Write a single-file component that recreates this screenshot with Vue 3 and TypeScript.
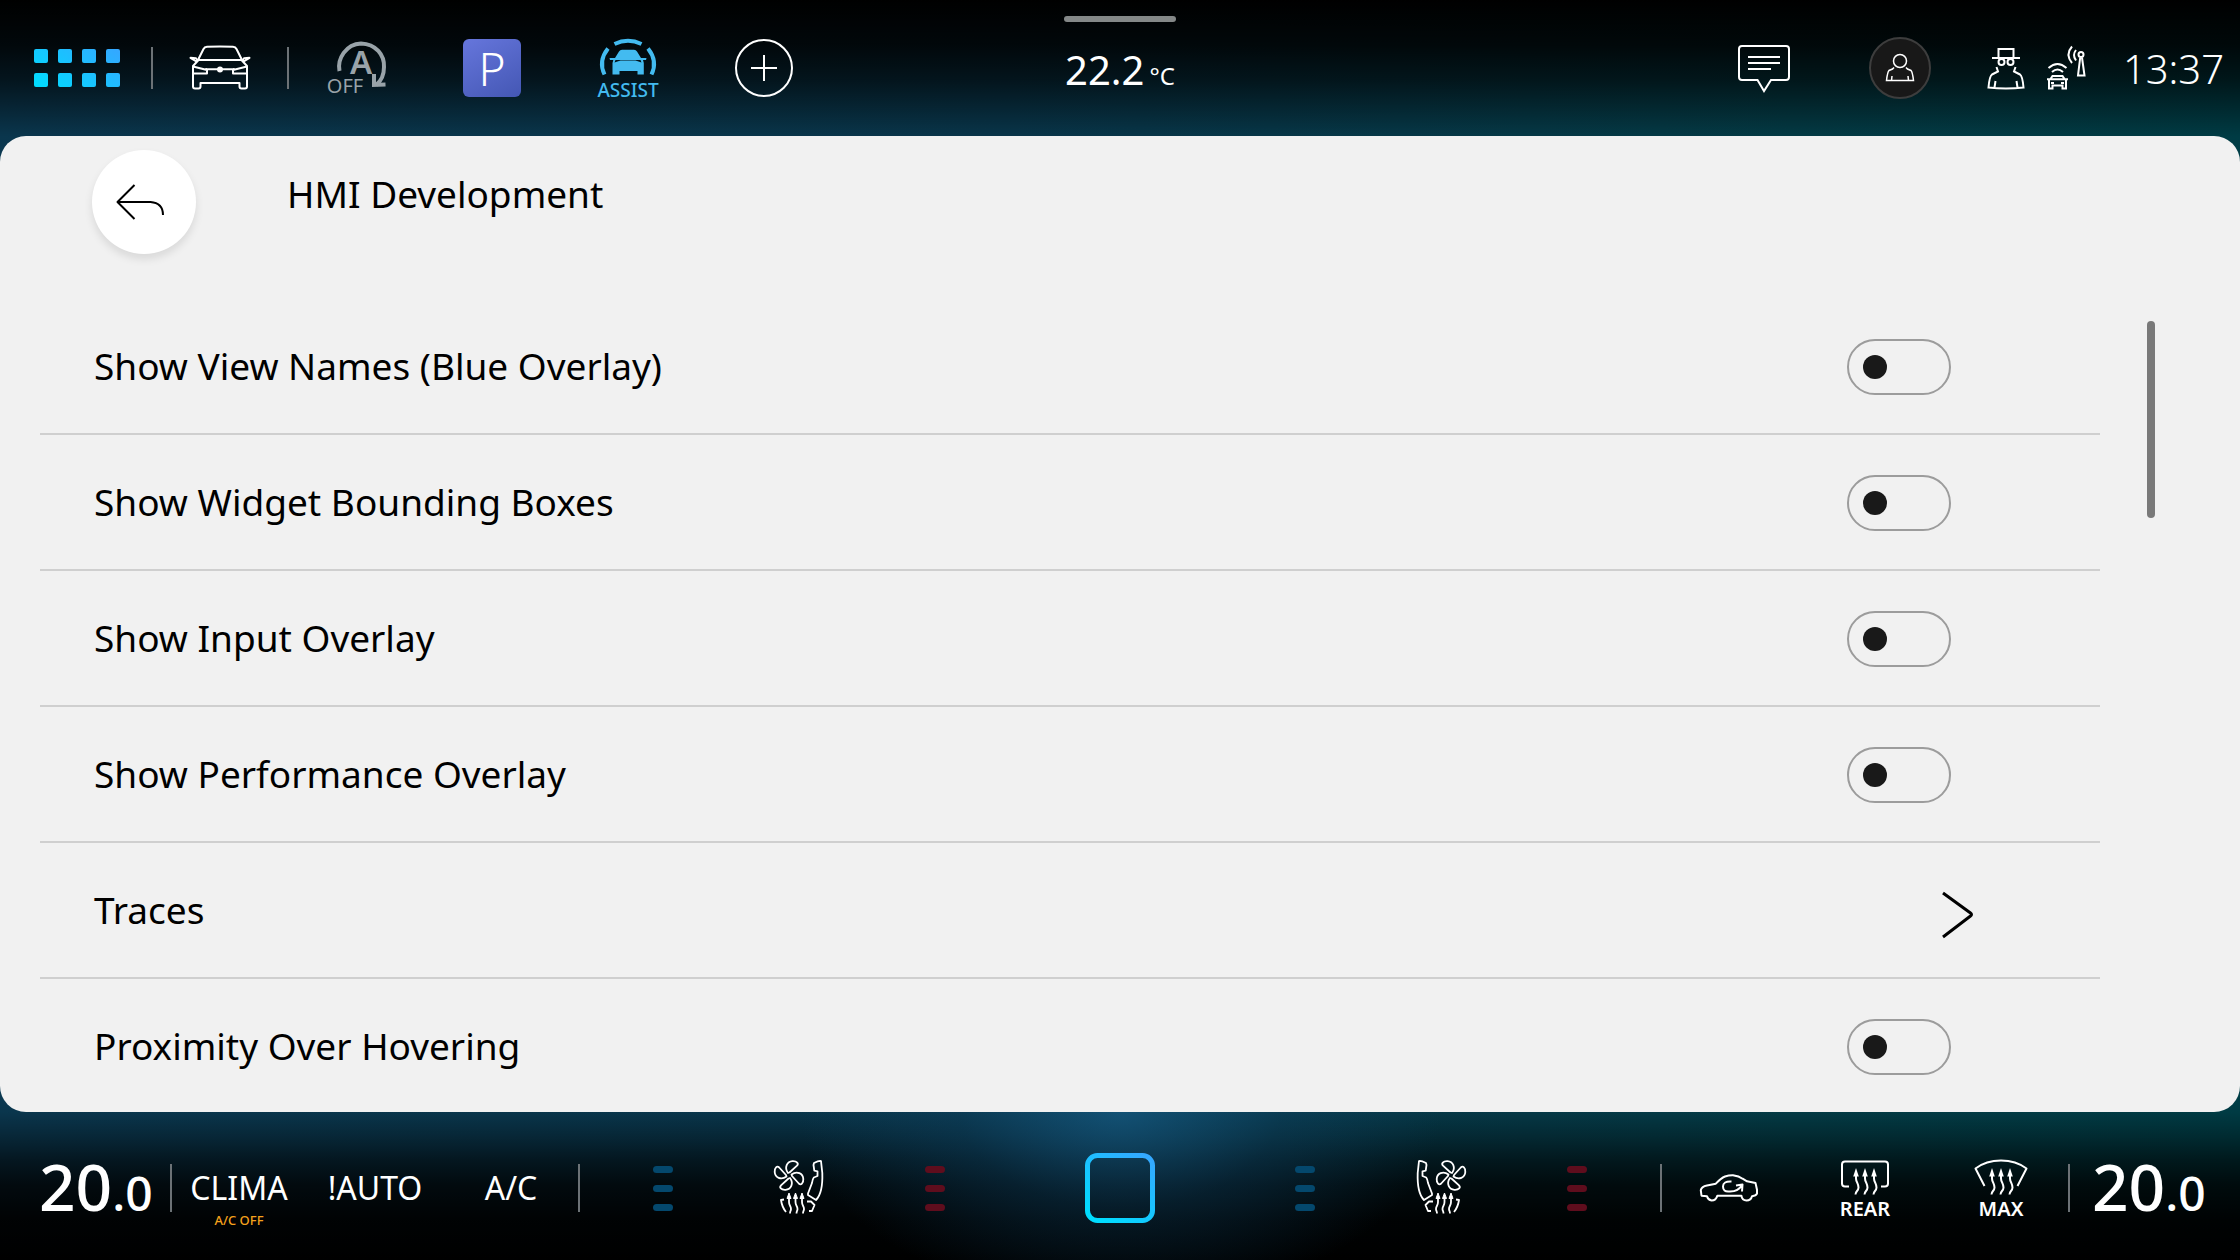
<script setup lang="ts">
import { ref } from 'vue'

interface Setting {
  id: string
  label: string
  kind: 'toggle' | 'link'
  on?: boolean
}

const settings = ref<Setting[]>([
  { id: 'view-names', label: 'Show View Names (Blue Overlay)', kind: 'toggle', on: false },
  { id: 'bounding-boxes', label: 'Show Widget Bounding Boxes', kind: 'toggle', on: false },
  { id: 'input-overlay', label: 'Show Input Overlay', kind: 'toggle', on: false },
  { id: 'performance', label: 'Show Performance Overlay', kind: 'toggle', on: false },
  { id: 'traces', label: 'Traces', kind: 'link' },
  { id: 'proximity', label: 'Proximity Over Hovering', kind: 'toggle', on: false },
])
</script>

<template>
  <div class="screen">
    <header class="topbar">
      <nav class="top-left">
        <button class="apps" aria-label="All apps">
          <svg width="86" height="38" viewBox="0 0 86 38">
            <defs>
              <linearGradient id="apps-fill" gradientUnits="userSpaceOnUse" x1="20" y1="50" x2="66" y2="-12">
                <stop offset="0" stop-color="#00dcff" />
                <stop offset="1" stop-color="#34a8ff" />
              </linearGradient>
            </defs>
            <g fill="url(#apps-fill)">
              <template v-for="row in 2" :key="row">
                <rect v-for="col in 4" :key="col" :x="(col - 1) * 24" :y="(row - 1) * 24" width="14" height="14" rx="2" />
              </template>
            </g>
          </svg>
        </button>
        <span class="rule rule-top"></span>
        <button class="slot" aria-label="Vehicle">
          <svg width="64" height="48" viewBox="0 0 64 48" fill="none" stroke="#fff" stroke-width="2" stroke-linejoin="round">
            <path d="M10 16 15.500 5q1-2 3.500-2.200Q32 2 45 2.800q2.500.2 3.500 2.200L54 16" />
            <path d="M9 16H55M10.500 16 5 22V42.500q0 2 2 2h3.500q2 0 2-2V39H51.500v3.500q0 2 2 2H57q2 0 2-2V22l-5.500-6" />
            <path d="M2.500 13.800 8 14.200l1.200 1.800-1.700 1zM61.500 13.800 56 14.200l-1.200 1.800 1.700 1z" />
            <path d="M5 22.500 19 26v3.500H5M59 22.500 45 26v3.500H59M17.500 25.300H46.500" />
            <circle cx="32" cy="25.500" r="2" fill="#fff" />
          </svg>
        </button>
        <span class="rule rule-top"></span>
        <button class="slot" aria-label="Start-stop off">
          <svg width="64" height="56" viewBox="0 0 64 56">
            <g fill="none" stroke="#99a3a9" stroke-width="4">
              <path d="M15.500 31C13 19 22 4 37 3.500 52 4 60.500 15 60 27c0 9-4 15-8 18" />
              <path d="M50 34V45L61.500 44.500" />
            </g>
            <g fill="#99a3a9">
              <text x="37" y="34" font-size="33" font-weight="600" text-anchor="middle">A</text>
              <text x="21" y="53" font-size="20" text-anchor="middle">OFF</text>
            </g>
          </svg>
        </button>
        <button class="slot" aria-label="Parking">
          <span class="park">P</span>
        </button>
        <button class="slot" aria-label="Assist">
          <svg width="72" height="64" viewBox="0 0 72 64" fill="#43bbf0">
            <g fill="none" stroke="#43bbf0" stroke-width="4">
              <path d="M22.500 8Q36 1.500 49.500 8M16 12.500Q6 25 12.500 38.500M56 12.500Q66 25 59.500 38.500" />
            </g>
            <path d="M23 22 27 15.500q1-1.700 3-1.700H42q2 0 3 1.700L49 22h5.500l-.5 2h-3l.8 3V38.500H45.500V35H27.500v3.500H20.500V27l.8-3H18l-.5-2z" />
            <path d="M22.500 26.500l1-2.500H48.500l1 2.500-6-2H28.500z" fill="#02151c" />
            <text x="36" y="61" font-size="19" font-weight="500" text-anchor="middle">ASSIST</text>
          </svg>
        </button>
        <button class="slot" aria-label="Add shortcut">
          <svg width="58" height="58" viewBox="0 0 58 58" fill="none" stroke="#fff" stroke-width="2">
            <circle cx="29" cy="29" r="28" />
            <path d="M29 16V42M16 29H42" />
          </svg>
        </button>
      </nav>

      <div class="outside">
        <span class="handle"></span>
        <p class="outside-temp">22.2<small>°C</small></p>
      </div>

      <div class="top-right">
        <button class="slot" aria-label="Messages">
          <svg width="54" height="50" viewBox="0 0 54 50" fill="none" stroke="#fff" stroke-width="2">
            <path d="M20.500 37H5q-3 0-3-3V6q0-3 3-3H49q3 0 3 3V34q0 3-3 3H34L27 48z" />
            <path d="M11 14H43M11 20H43M11 26H34" />
          </svg>
        </button>
        <button class="slot" aria-label="Profile">
          <span class="avatar">
            <svg width="30" height="30" viewBox="0 0 30 30" fill="none" stroke="#fff" stroke-width="1.500">
              <circle cx="15" cy="8" r="6.500" />
              <path d="M9 14.500 7.500 16 4 17.500Q2.500 19 1.500 27.500H28.500Q27.500 19 26 17.500L22.500 16 21 14.500M7 23l-.5 4.500M23 23l.5 4.500" />
            </svg>
          </span>
        </button>
        <span class="status">
          <svg width="40" height="44" viewBox="0 0 40 44" fill="none" stroke="#fff" stroke-width="2">
            <path d="M12.500 12V3h15v9M6 12H34" />
            <circle cx="15.500" cy="16" r="3" />
            <circle cx="24.500" cy="16" r="3" />
            <path d="M10.500 21 12 25.500 6 28.500Q3.500 30 2.500 41.500q8.500 1 17.500 1t17.500-1Q36.500 30 34 28.500l-6-3 1.500-4.500M9.500 35 8.500 41.500M30.500 35l1 6.500" />
          </svg>
          <svg width="40" height="46" viewBox="0 0 40 46" fill="none" stroke="#fff" stroke-width="2">
            <path d="M4.500 34 6.500 31H16.500l2 3M1 34.200H22M3 35V43.500H6.500V40.500H16.500v3H20V35M5 38H8M15 38h3" />
            <path d="M2.500 23q9-8 18 0M6 27q5.500-5 11 0" />
            <circle cx="35" cy="9.500" r="2.500" />
            <path d="M34.200 12.500 32 30.500h6.500L36 12.500M26 1.500q-7 8 0 16.500M30 5q-4 5 0 10.500" />
          </svg>
        </span>
        <time class="clock">13:37</time>
      </div>
    </header>

    <main class="panel">
      <div class="panel-head">
        <button class="back" aria-label="Back">
          <svg width="50" height="38" viewBox="0 0 50 38" fill="none" stroke="#000" stroke-width="2" stroke-linejoin="round">
            <path d="M18.500 2 1.500 19 18.500 36M2 19H34.500Q47 20 47 32" />
          </svg>
        </button>
        <h1>HMI Development</h1>
      </div>
      <div class="panel-body">
        <ul class="settings">
          <li v-for="item in settings" :key="item.id">
            <label v-if="item.kind === 'toggle'" class="row">
              <span class="name">{{ item.label }}</span>
              <input v-model="item.on" class="toggle" type="checkbox" role="switch" />
            </label>
            <a v-else class="row row-link" href="#traces">
              <span class="name">{{ item.label }}</span>
              <svg width="32" height="56" viewBox="0 0 32 56" fill="none" stroke="#000" stroke-width="3" stroke-linejoin="round">
                <path d="M2 10 29.500 30Q31.500 31.500 29.500 33L2 54" />
              </svg>
            </a>
          </li>
        </ul>
        <div class="track"><span class="thumb"></span></div>
      </div>
    </main>

    <footer class="climate">
      <p class="temp">20<small>.0</small></p>
      <span class="rule rule-bottom"></span>
      <div class="group">
        <button class="slot word">CLIMA<small>A/C OFF</small></button>
        <button class="slot word">!AUTO</button>
        <button class="slot word">A/C</button>
      </div>
      <span class="rule rule-bottom"></span>
      <div class="group zone">
        <button class="slot level cold" aria-label="Driver seat cooling"><i></i><i></i><i></i></button>
        <button class="slot" aria-label="Driver seat climate">
          <svg class="seat" width="52" height="58" viewBox="0 0 52 58"><use href="#seat-climate" /></svg>
        </button>
        <button class="slot level hot" aria-label="Driver seat heating"><i></i><i></i><i></i></button>
      </div>
      <button class="home" aria-label="Home">
        <svg width="70" height="70" viewBox="0 0 70 70">
          <defs>
            <linearGradient id="home-stroke" x1="0.2" y1="1" x2="0.9" y2="0">
              <stop offset="0" stop-color="#00dcff" />
              <stop offset="1" stop-color="#34a8ff" />
            </linearGradient>
          </defs>
          <rect x="2.500" y="2.500" width="65" height="65" rx="10" fill="none" stroke="url(#home-stroke)" stroke-width="5" />
        </svg>
      </button>
      <div class="group zone">
        <button class="slot level cold" aria-label="Passenger seat cooling"><i></i><i></i><i></i></button>
        <button class="slot" aria-label="Passenger seat climate">
          <svg class="seat mirrored" width="52" height="58" viewBox="0 0 52 58"><use href="#seat-climate" /></svg>
        </button>
        <button class="slot level hot" aria-label="Passenger seat heating"><i></i><i></i><i></i></button>
      </div>
      <span class="rule rule-bottom"></span>
      <div class="group">
        <button class="slot" aria-label="Air recirculation">
          <svg width="60" height="30" viewBox="0 0 60 30" fill="none" stroke="#fff" stroke-width="2" stroke-linejoin="round">
            <path d="M8 23.300 2.500 22.700 1.800 17.300Q2.500 13.500 8 12.500L16.800 10.700Q22 5 26 3.500 30 2.200 34 2.300 40 3 43.600 5.700L48 8.300 56.500 10 58 16.700V20.700Q57 23 53 23.300 52 27.500 47.500 27.500 43 27.500 42.400 22.700H18.300Q17 27.500 12.600 27.500 9 27 8 23.300z" />
            <path d="M32.500 8.500Q24 8 24 13.500T30 18.500Q39 19 43 12M37 12.500 43.500 11.500 43 18.500" />
          </svg>
        </button>
        <button class="slot stack">
          <svg width="50" height="38" viewBox="0 0 50 38" fill="none" stroke="#fff" stroke-width="2">
            <path d="M9 27.500H5q-3 0-3-3V5.500q0-3 3-3H45q3 0 3 3v19q0 3-3 3H41" />
            <use href="#warm-air" x="6" y="8" /><use href="#warm-air" x="15" y="8" /><use href="#warm-air" x="24" y="8" />
          </svg>
          REAR
        </button>
        <button class="slot stack">
          <svg width="54" height="38" viewBox="0 0 54 38" fill="none" stroke="#fff" stroke-width="2" stroke-linejoin="round">
            <path d="M10.500 27 1.500 9.500Q12 1.500 27 1.500T52.500 9.500L43.500 27" />
            <use href="#warm-air" x="8" y="8" /><use href="#warm-air" x="17" y="8" /><use href="#warm-air" x="26" y="8" />
          </svg>
          MAX
        </button>
      </div>
      <span class="rule rule-bottom"></span>
      <p class="temp temp-right">20<small>.0</small></p>
    </footer>

    <svg class="symbols" width="0" height="0" aria-hidden="true">
      <symbol id="warm-air" viewBox="0 0 20 30" width="20" height="30">
        <path d="M10 1 12.800 9.500H7.200z" fill="#fff" stroke="none" />
        <path d="M10 8V11.500C10 15 12.500 16.500 12.500 20.500 12.500 24 9.500 24 9.500 27.500" fill="none" stroke="#fff" stroke-width="2" />
      </symbol>
      <symbol id="seat-climate" viewBox="0 0 52 58">
        <g fill="none" stroke="#fff" stroke-width="1.800" stroke-linejoin="round">
          <g transform="translate(16 16.500)">
            <path v-for="angle in [0, 90, 180, 270]" :key="angle" :transform="`rotate(${angle})`" d="M-1-2.500C-5-8-2-14 3.500-14.300 8-14.500 10-12 8-9.800L.500-3z" />
          </g>
          <path d="M48 2Q46 1.500 41 4L40.500 6 41.300 11.700 44.500 12.300V17L40.800 18.500Q39.500 20 39 24L35 34.500V36L43 41Q50 34 49.300 14z" />
          <path d="M11 40.500 8 41Q9 48 13 53M34 42.500 38 42.500 41.500 46 39 52H36" />
          <path d="M16 39v4c0 4 2 4 2 7 0 2-1 2-1 4.500M22.500 39v4c0 4 2 4 2 7 0 2-1 2-1 4.500M29 39v4c0 4 2 4 2 7 0 2-1 2-1 4.500" />
          <path d="M16 34 18 39.500H14zM22.500 34l2 5.500h-4zM29 34l2 5.500H27z" fill="#fff" stroke-width="1" />
        </g>
      </symbol>
    </svg>
  </div>
</template>

<style>
body {
  margin: 0;
  background: #000;
}
</style>

<style scoped>
.screen {
  box-sizing: border-box;
  height: 100vh;
  display: grid;
  grid-template-rows: 136px minmax(0, 1fr) 148px;
  font-family: "Noto Sans", "Open Sans", sans-serif;
  color: #fff;
  background:
    linear-gradient(to bottom, #000 0, rgba(0, 0, 0, 0.88) 45px, rgba(0, 0, 0, 0.67) 80px, rgba(0, 0, 0, 0.45) 104px, rgba(0, 0, 0, 0.15) 136px, transparent 200px),
    linear-gradient(to top, #000 0, rgba(0, 0, 0, 0.96) 40px, rgba(0, 0, 0, 0.84) 75px, rgba(0, 0, 0, 0.64) 100px, rgba(0, 0, 0, 0.38) 124px, rgba(0, 0, 0, 0.15) 148px, transparent 200px),
    linear-gradient(to right, #0c3f5a, #0a3e56 45%, #044450 80%, #00454f);
}
button {
  border: 0;
  padding: 0;
  background: none;
  color: inherit;
  font: inherit;
}
p,
h1 {
  margin: 0;
  font-weight: 400;
}
svg {
  display: block;
  overflow: visible;
}
svg text {
  font-family: inherit;
}
.symbols {
  position: absolute;
}
.topbar {
  display: grid;
  grid-template-columns: 1fr auto 1fr;
}
.top-left,
.top-right {
  display: flex;
  align-items: center;
}
.top-right {
  justify-content: flex-end;
}
.slot {
  width: 136px;
  height: 100%;
  display: flex;
  align-items: center;
  justify-content: center;
}
.rule {
  width: 2px;
  margin: 0 -1px;
  background: #6c7276;
}
.rule-top {
  height: 42px;
}
.rule-bottom {
  height: 48px;
}
.apps {
  width: 152px;
  padding-left: 2px;
  display: flex;
  justify-content: center;
}
.park {
  width: 58px;
  height: 58px;
  border-radius: 6px;
  background: linear-gradient(150deg, #6676dc, #4457b4);
  font-size: 46px;
  font-weight: 300;
  line-height: 58px;
}
.outside {
  display: flex;
  flex-direction: column;
  align-items: center;
}
.handle {
  width: 112px;
  height: 6px;
  margin: 16px 0 20px;
  border-radius: 3px;
  background: #848888;
}
.outside-temp {
  font-size: 40px;
  line-height: 56px;
}
.outside-temp small {
  margin-left: 5px;
  font-size: 24px;
}
.avatar {
  box-sizing: border-box;
  width: 62px;
  height: 62px;
  display: grid;
  place-items: center;
  border: 2px solid #3d3d3d;
  border-radius: 50%;
  background: #181818;
}
.status {
  display: flex;
  align-items: center;
  gap: 20px;
  padding-left: 18px;
}
.clock {
  width: 136px;
  padding-right: 16px;
  box-sizing: border-box;
  margin-left: 18px;
  text-align: right;
  font-size: 40px;
  font-weight: 300;
}
.panel {
  display: flex;
  flex-direction: column;
  overflow: hidden;
  border-radius: 26px;
  background: #f1f1f1;
  color: #000;
}
.panel-head {
  height: 163px;
  flex: none;
  display: flex;
  align-items: flex-start;
  gap: 91px;
  padding: 14px 92px 0;
  box-sizing: border-box;
}
.back {
  width: 104px;
  height: 104px;
  padding-right: 6px;
  display: grid;
  place-items: center;
  border-radius: 50%;
  background: #fff;
  box-shadow: 0 5px 8px rgba(0, 0, 0, 0.1);
}
h1 {
  font-size: 37px;
  line-height: 88px;
}
.panel-body {
  flex: 1;
  min-height: 0;
  display: flex;
}
.settings {
  flex: 1;
  margin: 0;
  padding: 0 0 0 40px;
  list-style: none;
}
.row {
  box-sizing: border-box;
  height: 136px;
  display: flex;
  align-items: center;
  justify-content: space-between;
  padding: 2px 149px 0 54px;
  border-bottom: 2px solid #cfcfcf;
  color: inherit;
  font-size: 37px;
  text-decoration: none;
}
.row-link {
  padding-right: 127px;
}
.name {
  padding-bottom: 4px;
}
.toggle {
  appearance: none;
  box-sizing: border-box;
  width: 104px;
  height: 56px;
  margin: 0;
  padding: 0 14px;
  display: flex;
  align-items: center;
  border: 2px solid #9c9c9c;
  border-radius: 28px;
}
.toggle::before {
  content: "";
  width: 24px;
  height: 24px;
  border-radius: 50%;
  background: #191919;
}
.toggle:checked {
  justify-content: flex-end;
}
.track {
  width: 93px;
  padding: 22px 0 0 47px;
}
.thumb {
  display: block;
  width: 8px;
  height: 197px;
  border-radius: 4px;
  background: #797979;
}
.climate {
  box-sizing: border-box;
  padding-top: 4px;
  display: flex;
  align-items: center;
  background: radial-gradient(ellipse 320px 190px at 50% 0, rgba(24, 96, 140, 0.65), rgba(16, 70, 104, 0.36) 50%, transparent);
}
.group {
  display: flex;
  height: 100%;
}
.zone {
  margin: 0 16px;
}
.temp {
  width: 171px;
  padding: 4px 0 0 39px;
  box-sizing: border-box;
  font-size: 64px;
  font-weight: 500;
  line-height: 88px;
}
.temp-right {
  padding-left: 23px;
}
.temp small {
  font-size: 48px;
}
.word {
  flex-direction: column;
  font-size: 32px;
  line-height: 48px;
}
.word small {
  height: 0;
  font-size: 13px;
  font-weight: 500;
  line-height: 16px;
  color: #f5a11c;
}
.level {
  flex-direction: column;
  gap: 12px;
}
.level i {
  width: 20px;
  height: 7px;
  border-radius: 4px;
}
.cold i {
  background: #04486d;
}
.hot i {
  background: #5f0d1d;
}
.mirrored {
  transform: scaleX(-1);
}
.home {
  flex: 1;
  display: flex;
  justify-content: center;
}
.stack {
  padding-top: 4px;
  flex-direction: column;
  font-size: 20px;
  font-weight: 600;
  line-height: 24px;
}
</style>
